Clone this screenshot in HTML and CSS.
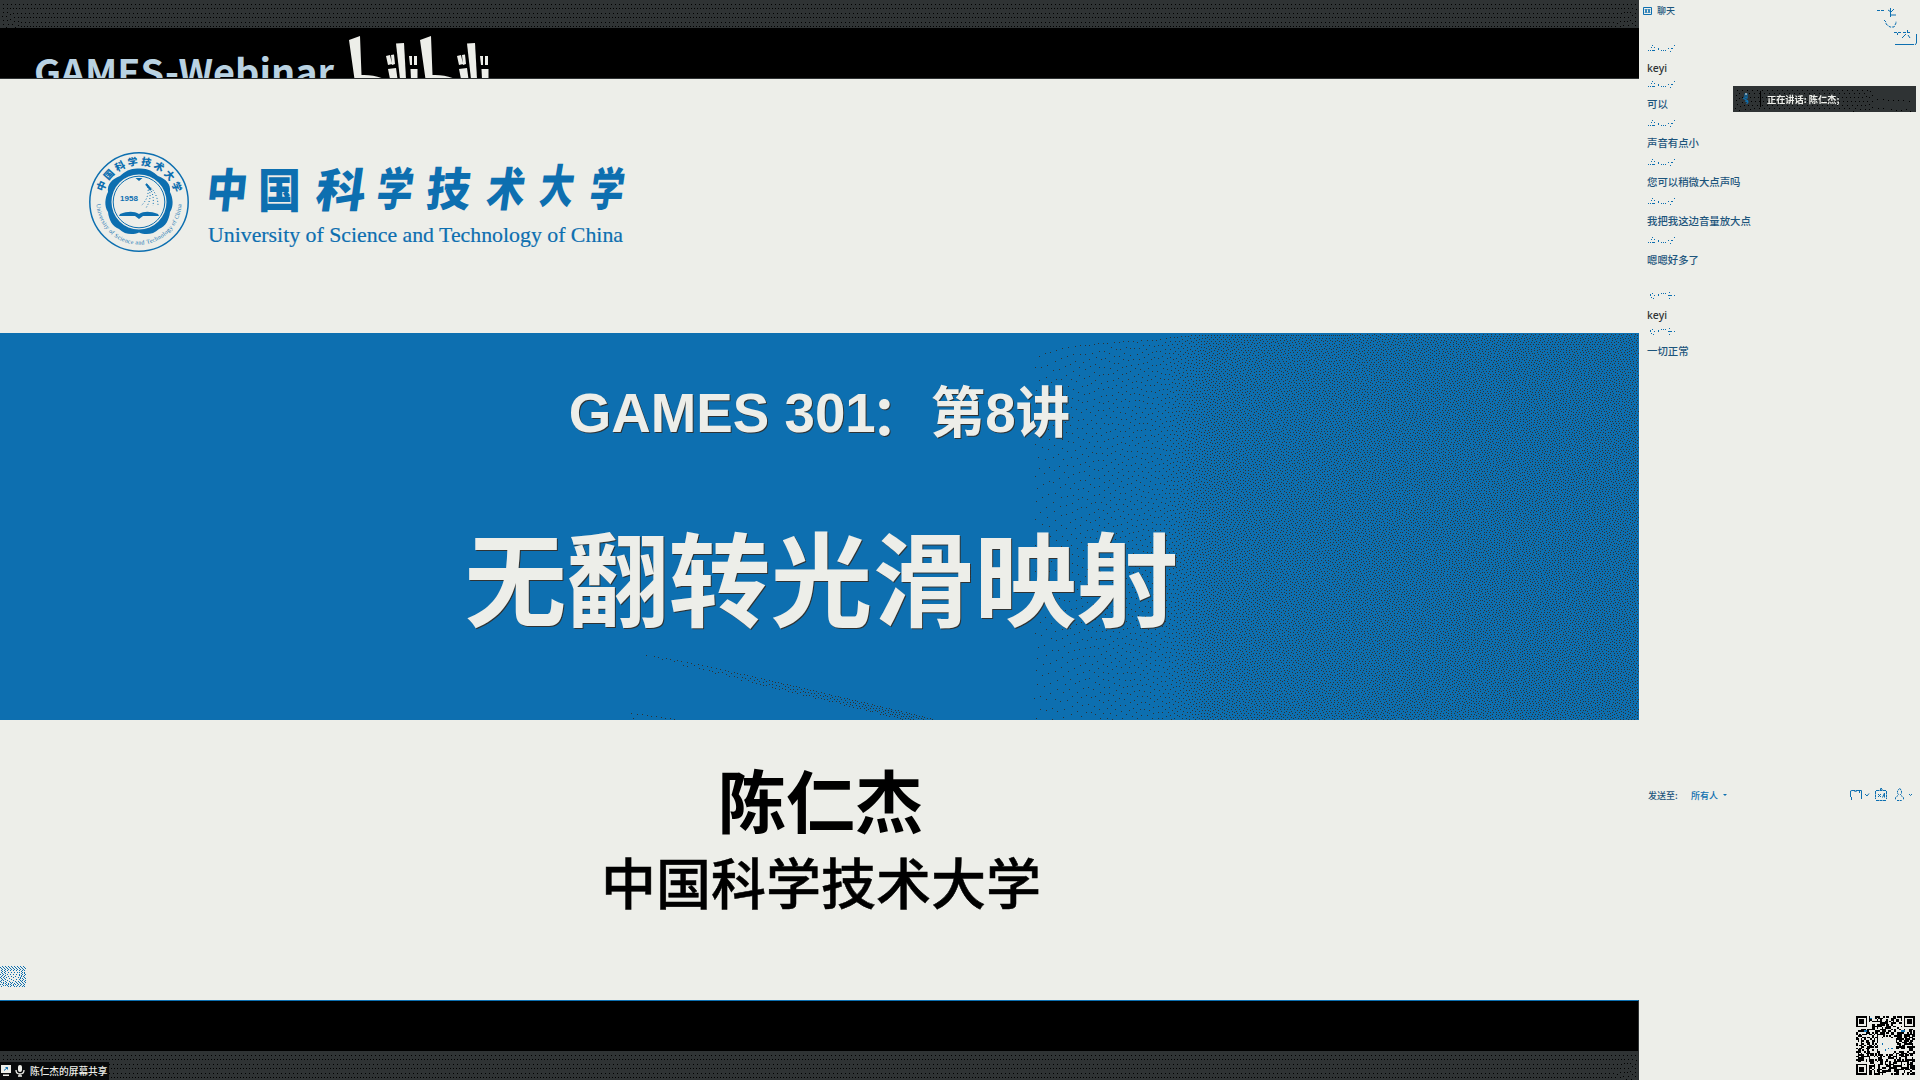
FILE: index.html
```html
<!DOCTYPE html>
<html lang="zh-CN">
<head>
<meta charset="utf-8">
<title>GAMES 301：第8讲</title>
<link rel="stylesheet" href="styles.css">
</head>
<body>
<div class="app">
  <main class="stage">
    <div class="frame"><canvas class="grain" data-kind="dark" width="1639" height="28"></canvas></div>
    <div class="letterbox letterbox-top">
      <svg class="brand" width="1639" height="51" viewBox="0 28 1639 51">
        <text class="brand-name" x="34" y="86" textLength="300" lengthAdjust="spacingAndGlyphs">GAMES-Webinar</text>
        <defs>
          <g id="bili">
            <path d="M349 40L360 36L361.500 75Q374 74.500 384 79H354.500Z"/>
            <path d="M386 56L390 55L392 64L388 65ZM391 55L394 54.500L395 64L392 65ZM388 69L396 68L397.500 79H390Z"/>
            <path d="M396 43.500L404 43L406 79H400Z"/>
            <path d="M409 56H412V65H410ZM414 56H417V65H414ZM410.500 69H417.500V79H411Z"/>
          </g>
        </defs>
        <use href="#bili"/><use href="#bili" x="71"/>
      </svg>
    </div>
    <header class="school">
      <svg class="emblem" width="102" height="102" viewBox="-51 -51 102 102">
        <defs>
          <path id="arcTop" d="M-37 0A37 37 0 0 1 37 0"/>
          <path id="arcBottom" d="M-42.500 0A42.500 42.500 0 0 0 42.500 0"/>
        </defs>
        <circle class="line" r="49.200" stroke-width="1.500"/>
        <path class="solid" fill-rule="evenodd" d="M0-33.500C8-34 14-31 19-26C27-23 32-18 31-10C34-4 35 4 31 10C30 18 27 24 20 27C14 33 6 33 0 30.500C-6 33-14 33-20 27C-27 24-30 18-31 10C-35 4-34-4-31-10C-32-18-27-23-19-26C-14-31-8-34 0-33.500ZM0-27.500A27.500 27.500 0 1 0 0 27.500A27.500 27.500 0 1 0 0-27.500Z"/>
        <circle class="line" r="25.800" stroke-width="1"/>
        <path class="solid" d="M-3.500-24H3.500L0-21ZM-19 12C-11 9-5 9 0 12C5 9 11 9 19 12L20 14H4L0 17L-4 14H-20Z"/>
        <path class="line spray" d="M7-18C15-14 19-4 19 3M7-18C14-12 15-4 14 4M7-18C13-10 12-2 7 6M8-18C11-9 8-2 2 4"/>
        <path class="line" stroke-width="2" d="M7-18L12-12"/>
        <text class="year" x="-19" y="-1.500" textLength="18">1958</text>
        <text class="ring-cn"><textPath href="#arcTop" startOffset="10" textLength="97">中国科学技术大学</textPath></text>
        <text class="ring-en"><textPath href="#arcBottom" startOffset="2" textLength="129">University of Science and Technology of China</textPath></text>
      </svg>
      <svg class="wordmark" width="430" height="100" viewBox="200 155 430 100">
        <g class="brush">
          <text transform="translate(205 207) skewX(-6)" textLength="41" lengthAdjust="spacingAndGlyphs">中</text>
          <text transform="translate(258 207)" textLength="43" lengthAdjust="spacingAndGlyphs">国</text>
          <text transform="translate(314 207) skewX(-8)" textLength="50" lengthAdjust="spacingAndGlyphs">科</text>
          <text transform="translate(375 206) skewX(-8)" textLength="36" lengthAdjust="spacingAndGlyphs">学</text>
          <text transform="translate(425 206) skewX(-6)" textLength="44" lengthAdjust="spacingAndGlyphs">技</text>
          <text transform="translate(485 206) skewX(-8)" textLength="38" lengthAdjust="spacingAndGlyphs">术</text>
          <text transform="translate(538 203) skewX(-8)" textLength="34" lengthAdjust="spacingAndGlyphs">大</text>
          <text transform="translate(588 206) skewX(-8)" textLength="34" lengthAdjust="spacingAndGlyphs">学</text>
        </g>
        <text class="latin" x="208" y="242" textLength="415" lengthAdjust="spacingAndGlyphs">University of Science and Technology of China</text>
      </svg>
    </header>
    <section class="banner">
      <canvas class="grain backdrop" data-kind="blue" width="1639" height="387"></canvas>
      <h2 class="lecture">GAMES 301<span class="colon">：</span>第8讲</h2>
      <h1 class="title">无翻转光滑映射</h1>
    </section>
    <section class="speaker">
      <p class="speaker-name">陈仁杰</p>
      <p class="speaker-school">中国科学技术大学</p>
      <canvas class="grain corner" data-kind="corner" width="26" height="21"></canvas>
    </section>
    <div class="letterbox letterbox-bottom"></div>
    <div class="frame"><canvas class="grain" data-kind="dark" width="1639" height="29"></canvas></div>
    <div class="sharing">
      <svg width="12" height="12" viewBox="0 0 12 12"><path d="M1 0H11V8H1ZM3 9.500H9V11H3Z" fill="#edeee9"/><path d="M4 5.500L7.500 2.500M5.500 2.500H7.500V4.500" stroke="#0d6fb0" fill="none"/></svg>
      <svg width="10" height="12" viewBox="0 0 10 12"><rect x="3" y="0" width="4" height="7" rx="2" fill="#edeee9"/><path d="M1 5Q1 9 5 9T9 5M5 9V11.500M3 11H7" stroke="#edeee9" stroke-width="1.300" fill="none"/></svg>
      <span>陈仁杰的屏幕共享</span>
    </div>
  </main>

  <aside class="chat">
    <div class="chat-head">
      <svg width="9" height="8" viewBox="0 0 9 8"><path d="M.5.500H8.500V7.500H.5ZM2 2L4 6M4 2L2 6M5 2L7 6M7 2L5 6" fill="none" stroke="#0d6fb0"/></svg>
      <span>聊天</span>
    </div>
    <svg class="head-tools" width="42" height="40" viewBox="0 0 42 40">
      <path d="M0 3.500H8M7 13L9 15V17L13 20H17L19 16V14M17 25.500H24M26 25.500H33" fill="none" stroke="#0d6fb0" stroke-dasharray="3 1"/>
      <path d="M13.500 1V10M11 3L14 5L17 2M14 8H19M20.500 26V28M30.500 23V26M29 27L25 31M31 28L33 31M18 37.500H37M39.500 27V36L38 38" fill="none" stroke="#0d6fb0"/>
    </svg>
    <svg width="0" height="0" class="defs"><defs>
      <path id="specks-a" d="M5 0h1v1h-1zM27 0h1v1h-1zM4 2h1v1h-1zM7 2h1v1h-1zM11 3h1v2h-1zM21 3h1v1h-1zM24 3h2v1h-2zM1 5h1v1h-1zM3 5h1v1h-1zM5 5h3v1h-3zM14 5h1v1h-1zM16 5h1v1h-1zM18 5h1v1h-1zM23 6h1v1h-1z"/>
      <path id="specks-b" d="M3 2h1v2h-1zM5 1h1v1h-1zM7 3h1v1h-1zM11 2h1v2h-1zM14 1h1v1h-1zM16 1h1v1h-1zM18 1h1v1h-1zM22 0h1v1h-1zM21 3h4v1h-4zM27 3h1v1h-1zM4 5h1v1h-1zM6 6h1v1h-1zM22 6h1v1h-1z"/>
    </defs></svg>
    <ul class="messages">
      <li class="tight"><svg class="sender"><use href="#specks-a"/></svg><p class="latin-msg">keyi</p></li>
      <li><svg class="sender"><use href="#specks-a"/></svg><p>可以</p></li>
      <li><svg class="sender"><use href="#specks-a"/></svg><p>声音有点小</p></li>
      <li><svg class="sender"><use href="#specks-a"/></svg><p>您可以稍微大点声吗</p></li>
      <li><svg class="sender"><use href="#specks-a"/></svg><p>我把我这边音量放大点</p></li>
      <li class="spaced"><svg class="sender"><use href="#specks-a"/></svg><p>嗯嗯好多了</p></li>
      <li class="tight"><svg class="sender"><use href="#specks-b"/></svg><p class="latin-msg">keyi</p></li>
      <li><svg class="sender"><use href="#specks-b"/></svg><p>一切正常</p></li>
    </ul>
    <div class="composer">
      <span class="to">发送至:</span><span class="target">所有人</span><i class="caret"></i>
      <svg class="tools" width="64" height="14" viewBox="1849 788 64 14" fill="none" stroke="#0d6fb0">
        <path d="M1850.500 797V791L1852 790.500H1855V792M1851.500 797V800M1856 792V790.500H1861.500V799M1859.500 791V793M1865 794L1867 796L1869 793.500"/>
        <path d="M1875.500 791V799M1886.500 791V799M1876 790.500H1886M1880.500 790V788.500H1882V790M1876 800.500H1886" stroke-dasharray="3 .5"/>
        <path d="M1878 794L1881 797M1881 794L1878 797M1882.500 797.500L1884.500 793V797.500"/>
        <path d="M1899.500 788.500L1897.500 791V793.500L1899.500 795M1900 788.500L1901.500 791V793.500L1900 795M1898 795.500L1895.500 797.500V800M1901 795.500L1903.500 797.500V800M1897 800.500H1902" stroke-dasharray="2 .7"/>
        <path d="M1909 794L1910.500 795.500L1912 794"/>
      </svg>
    </div>
    <svg class="qr" width="59" height="59" viewBox="0 0 37 37" shape-rendering="crispEdges"></svg>
  </aside>

  <div class="toast">
    <canvas class="grain backdrop" data-kind="toast" width="183" height="26"></canvas>
    <svg width="8" height="12" viewBox="0 0 8 12"><path d="M2 1H5V5L3 4.500V2M1 5L6 8M3 8L6 9L4.500 11" fill="none" stroke="#0d6fb0" stroke-width="1.200"/><path d="M3 1H5" stroke="#edeee9"/></svg>
    <i class="divider"></i>
    <span>正在讲话: 陈仁杰;</span>
  </div>
</div>
<script src="texture.js"></script>
</body>
</html>
```
FILE: styles.css
```css
:root {
  --paper: #edeee9;
  --blue: #0d6fb0;
  --slate: #2f3334;
  --sans: "Noto Sans CJK SC", sans-serif;
}
* { box-sizing: border-box; margin: 0; padding: 0; }
body { width: 1920px; height: 1080px; overflow: hidden; background: var(--paper); font-family: var(--sans); }
.app { position: relative; display: grid; grid-template-columns: 1639px 1fr; height: 1080px; }
.stage { position: relative; display: grid; grid-template-rows: 28px 51px 254px 387px 280px 51px 29px; }
.frame { background: var(--slate); overflow: hidden; }
.grain { display: block; }
.letterbox { background: #000; overflow: hidden; }
.letterbox-top { border-bottom: 1px solid var(--slate); }
.letterbox-bottom { border-top: 1px solid var(--blue); border-right: 1px solid var(--slate); }
.brand { display: block; fill: var(--paper); }
.brand-name { font: 700 37px var(--sans); fill: #b9d2e2; }

.school { display: flex; align-items: flex-start; padding: 72px 0 0 88px; gap: 10px; }
.wordmark { margin-top: 4px; }
.line { fill: none; stroke: var(--blue); }
.solid { fill: var(--blue); }
.spray { stroke-width: 1; stroke-dasharray: 1 2; }
.year { font: bold 8px "Liberation Sans", sans-serif; fill: var(--blue); }
.ring-cn { font: 900 10px var(--sans); fill: var(--blue); }
.ring-en { font: 6px "Liberation Serif", serif; fill: var(--blue); }
.brush { font: 900 46px var(--sans); fill: var(--blue); }
.latin { font: 21.500px "Liberation Serif", serif; fill: var(--blue); stroke: var(--blue); stroke-width: .2px; }

.banner { position: relative; display: flex; flex-direction: column; align-items: center; background: var(--blue); color: var(--paper); }
.backdrop { position: absolute; inset: 0; }
.lecture, .title { position: relative; white-space: nowrap; text-shadow: 1px 1px 0 var(--slate); }
.lecture { margin-top: 40px; font: bold 54.700px/80px "Liberation Sans", "Noto Sans CJK SC", sans-serif; }
.colon { display: inline-block; transform: translate(-5px, 3px); }
.title { margin-top: 60px; font: bold 102px/124px var(--sans); padding-left: 4px; }

.speaker { position: relative; display: flex; flex-direction: column; align-items: center; color: #000; }
.speaker-name { margin-top: 38px; font: 700 68.500px/82px var(--sans); padding-left: 2px; }
.speaker-school { margin-top: 6px; font: 500 55px/68px var(--sans); padding-left: 3px; -webkit-text-stroke: .5px #000; }
.corner { position: absolute; left: 0; top: 246px; }

.sharing { position: absolute; left: 0; bottom: 0; display: flex; align-items: center; width: 109px; height: 18px; background: #080a0b; color: var(--paper); font: 500 9.700px/18px var(--sans); white-space: nowrap; }
.sharing svg + svg { margin-left: 3px; }
.sharing span { margin-left: 5px; }

.chat { position: relative; display: flex; flex-direction: column; color: #1d557c; font-size: 10.400px; font-weight: 500; }
.chat-head { display: flex; align-items: center; gap: 5px; height: 21px; padding-left: 4px; font-size: 9px; }
.head-tools { position: absolute; left: 238px; top: 7px; }
.defs { position: absolute; }
.messages { display: flex; flex-direction: column; list-style: none; padding: 24px 0 0 8px; }
.messages li { height: 39px; }
.messages .tight { height: 36px; }
.messages .spaced { height: 55px; }
.sender { display: block; width: 30px; height: 8px; fill: var(--blue); shape-rendering: crispEdges; }
.messages p { height: 16px; margin-top: 7px; line-height: 16px; white-space: nowrap; }
.messages .latin-msg { font-family: "Noto Sans", sans-serif; font-size: 10.500px; color: var(--slate); }
.composer { display: flex; align-items: center; height: 16px; margin-top: 420px; padding: 0 7px 0 9px; font-size: 9px; color: var(--blue); }
.to { width: 43px; color: #1d557c; }
.caret { margin-left: 5px; border: 2px solid transparent; border-top-color: var(--blue); border-bottom: 0; }
.tools { margin-left: auto; }
.qr { position: absolute; left: 217px; top: 1016px; }

.toast { position: absolute; left: 1733px; top: 86px; display: flex; align-items: center; width: 183px; height: 26px; padding-left: 9px; background: var(--slate); color: var(--paper); font: 700 9.200px/26px var(--sans); white-space: nowrap; }
.toast svg, .toast span, .divider { position: relative; }
.divider { width: 1px; height: 16px; margin: 0 6px 0 10px; background: #000; }
```
FILE: texture.js
```js
// Error-diffused grain: each kind maps a pixel to the share of speckles there.
const clamp = (v, a, b) => Math.min(b, Math.max(a, v));
const kinds = {
  dark: { ink: '#000000', share: () => 0.065 },
  toast: { ink: '#000000', share: (x) => (x < 140 ? 0.06 : 0.02) },
  corner: { ink: '#0d6fb0', share: (x, y) => (x > 5 && x < 19 && y > 4 && y < 16 ? 0.16 : 0.34) },
  blue: {
    ink: '#2f3334',
    share: (x, y) => {
      if (x >= 1028) {
        if (x < 1160) return 0.01 + 0.03 * (x - 1028) / 132;
        return clamp(0.04 + 0.09 * (x - 1160) / 50, 0, 0.13) + clamp((x - 1220) / 12000, 0, 0.025);
      }
      const mid = 317 + (x - 638) * 0.245;
      if (x > 638 && x < 940 && Math.abs(y - mid) < 5) return 0.03 + 0.15 * (x - 638) / 300;
      const low = 371 + (x - 625) * 0.14;
      if (x > 625 && x < 725 && y > low) return 0.035;
      return 0;
    }
  }
};
document.querySelectorAll('canvas.grain').forEach((canvas) => {
  const { ink, share } = kinds[canvas.dataset.kind];
  const ctx = canvas.getContext('2d');
  const { width: w, height: h } = canvas;
  ctx.fillStyle = ink;
  let row = new Float32Array(w + 2);
  for (let y = 0; y < h; y++) {
    const next = new Float32Array(w + 2);
    const step = y % 2 ? -1 : 1;
    for (let i = 0; i < w; i++) {
      const x = step > 0 ? i : w - 1 - i;
      const target = share(x, y);
      const v = target === 0 ? 0 : target + row[x + 1];
      const on = v > 0.5 ? 1 : 0;
      if (on) ctx.fillRect(x, y, 1, 1);
      const err = v - on;
      row[x + 1 + step] += err * 7 / 16;
      next[x + 1 - step] += err * 3 / 16;
      next[x + 1] += err * 5 / 16;
      next[x + 1 + step] += err / 16;
    }
    row = next;
  }
});

// QR modules: 37 x 37 with three finders, one alignment mark and a clear centre.
const size = 37;
let seed = 301;
const random = () => (seed = (seed * 1103515245 + 12345) % 2147483648) / 2147483648;
const ring = (x, y, cx, cy) => Math.max(Math.abs(x - cx), Math.abs(y - cy));
let d = '';
for (let y = 0; y < size; y++) {
  for (let x = 0; x < size; x++) {
    let on = random() < 0.55;
    for (const [cx, cy] of [[3, 3], [33, 3], [3, 33]]) {
      const r = ring(x, y, cx, cy);
      if (r <= 4) on = r === 3 || r <= 1;
    }
    const a = ring(x, y, 30, 30);
    if (a <= 2) on = a !== 1;
    if (Math.hypot(x - 19, (y - 18) * 1.1) < 6) on = false;
    if (on) d += `M${x} ${y}h1v1h-1z`;
  }
}
document.querySelector('.qr').innerHTML =
  `<path d="${d}"/><path fill="#0d6fb0" d="M16 17h1v1h-1zM18 21h1v1h-1zM20 20h1v1h-1zM22 20h1v1h-1zM5 9h2v1h-2zM28 9h3v1h-3zM9 1h1v1h-1z"/>`;
```
